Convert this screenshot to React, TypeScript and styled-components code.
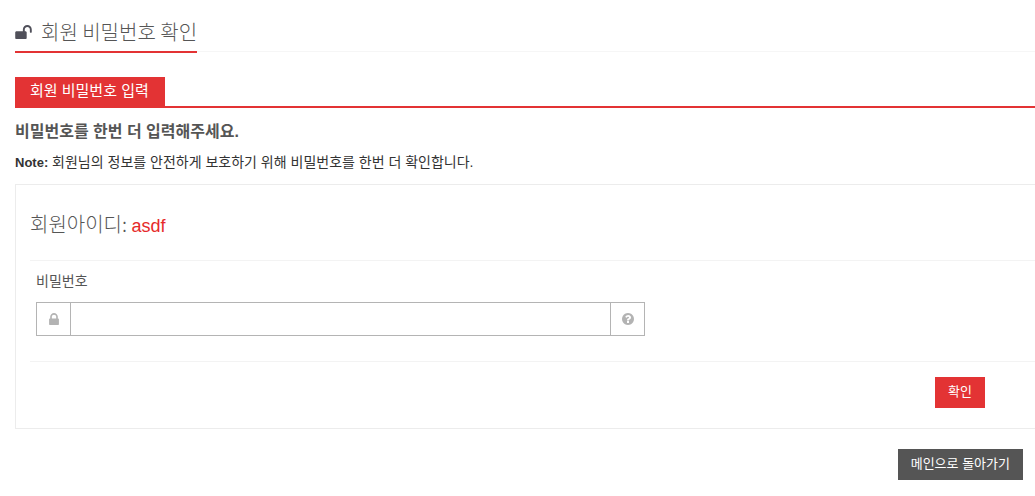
import React from 'react';
import styled, { createGlobalStyle } from 'styled-components';

const RED = '#e33334';
const LATIN_FIRST = '"Liberation Sans", "Noto Sans CJK KR", sans-serif';
const KOREAN_FIRST = '"Noto Sans CJK KR", "Liberation Sans", sans-serif';

const GlobalStyle = createGlobalStyle`
  * { box-sizing: border-box; }
  body {
    margin: 0;
    background: #fff;
    color: #333;
    font-family: ${LATIN_FIRST};
    font-size: 14px;
    line-height: 20px;
  }
`;

const Page = styled.main`
  padding: 20px 0 16px 15px;
`;

const Headline = styled.header`
  display: flex;
  border-bottom: 1px solid #f6f6f6;
`;

const Title = styled.h1`
  display: flex;
  align-items: center;
  gap: 9px;
  margin: 0 0 -2px;
  padding-bottom: 7px;
  border-bottom: 2px solid ${RED};
  color: #555;
  font-family: ${KOREAN_FIRST};
  font-size: 20px;
  font-weight: 300;
  line-height: 24px;
  white-space: nowrap;
`;

const TabBar = styled.nav`
  display: flex;
  margin-top: 25px;
  border-bottom: 2px solid ${RED};
`;

const Tab = styled.a`
  min-width: 150px;
  padding: 2px 15px 3px;
  background: ${RED};
  color: #fff;
  font-size: 15px;
  line-height: 24px;
  text-decoration: none;
`;

const Prompt = styled.h2`
  margin: 14px 0 0;
  color: #555;
  font-size: 16px;
  font-weight: 700;
  line-height: 20px;
`;

const Note = styled.p`
  margin: 10px 0 11px;
  line-height: 20px;
`;

const NoteLabel = styled.strong`
  font-size: 13px;
`;

const Card = styled.form`
  padding: 25px 0 20px 14px;
  border: 1px solid #ececec;
  border-right: 0;
`;

const Member = styled.h3`
  margin: 0;
  padding-bottom: 20px;
  color: #555;
  font-family: ${KOREAN_FIRST};
  font-size: 20px;
  font-weight: 300;
  line-height: 27px;
`;

const MemberId = styled.span`
  color: #e62a2a;
  font-family: ${LATIN_FIRST};
  font-size: 18px;
  font-weight: 400;
`;

const Fields = styled.div`
  padding: 10px 6px 25px;
  border: solid #f3f3f3;
  border-width: 1px 0;
`;

const Label = styled.label`
  display: block;
  margin-bottom: 11px;
  color: #555;
  line-height: 20px;
`;

const InputGroup = styled.div`
  display: flex;
  max-width: 609px;
  height: 34px;
  border: 1px solid #b4b4b4;
`;

const Addon = styled.span`
  display: flex;
  flex: 0 0 33px;
  align-items: center;
  justify-content: center;
  color: #b3b3b3;
`;

const PasswordInput = styled.input`
  flex: 1;
  min-width: 0;
  padding: 6px 12px;
  border: solid #b4b4b4;
  border-width: 0 1px;
  outline: 0;
  background: #fff;
  font: inherit;
`;

const Actions = styled.div<{ $inset: number }>`
  display: flex;
  justify-content: flex-end;
  padding-right: ${({ $inset }) => $inset}px;
`;

const CardActions = styled(Actions)`
  padding-top: 15px;
`;

const PageActions = styled(Actions)`
  padding-top: 20px;
`;

const Button = styled.button<{ $tone: string }>`
  height: 31px;
  padding: 0 13px 2px;
  border: 0;
  background: ${({ $tone }) => $tone};
  color: #fff;
  font-family: inherit;
  font-size: 13px;
  line-height: 20px;
  cursor: pointer;
`;

const UnlockIcon = () => (
  <svg width="17" height="14" viewBox="0 128 1664 1408" fill="#50505a" aria-hidden="true">
    <path d="M1664 576v256q0 26-19 45t-45 19h-64q-26 0-45-19t-19-45v-256q0-106-75-181t-181-75-181 75-75 181v192h96q40 0 68 28t28 68v576q0 40-28 68t-68 28h-960q-40 0-68-28t-28-68v-576q0-40 28-68t68-28h672v-192q0-185 131.5-316.5t316.5-131.5 316.5 131.5 131.5 316.5z" />
  </svg>
);

const LockIcon = () => (
  <svg width="10" height="12" viewBox="0 128 1152 1408" fill="currentColor" aria-hidden="true">
    <path d="M320 768h512v-192q0-106-75-181t-181-75-181 75-75 181v192zm832 96v576q0 40-28 68t-68 28h-960q-40 0-68-28t-28-68v-576q0-40 28-68t68-28h32v-192q0-184 132-316t316-132 316 132 132 316v192h32q40 0 68 28t28 68z" />
  </svg>
);

const QuestionIcon = () => (
  <svg width="12" height="12" viewBox="128 128 1536 1536" fill="currentColor" aria-hidden="true">
    <path d="M1024 1376v-192q0-14-9-23t-23-9h-192q-14 0-23 9t-9 23v192q0 14 9 23t23 9h192q14 0 23-9t9-23zm256-672q0-88-55.5-163t-138.5-116-170-41q-243 0-371 213-15 24 8 42l132 100q7 6 19 6 16 0 25-12 53-68 86-92 34-24 86-24 48 0 85.5 26t37.5 59q0 38-20 61t-68 45q-63 28-115.5 86.5t-52.5 125.5v36q0 14 9 23t23 9h192q14 0 23-9t9-23q0-19 21.5-49.5t54.5-49.5q32-18 49-28.5t46-35 44.5-48 28-60.5 12.5-81zm384 192q0 209-103 385.5t-279.5 279.5-385.5 103-385.5-103-279.5-279.5-103-385.5 103-385.5 279.5-279.5 385.5-103 385.5 103 279.5 279.5 103 385.5z" />
  </svg>
);

export default function App() {
  return (
    <>
      <GlobalStyle />
      <Page>
        <Headline>
          <Title>
            <UnlockIcon />
            회원 비밀번호 확인
          </Title>
        </Headline>
        <TabBar>
          <Tab href="#password">회원 비밀번호 입력</Tab>
        </TabBar>
        <Prompt>비밀번호를 한번 더 입력해주세요.</Prompt>
        <Note>
          <NoteLabel>Note:</NoteLabel> 회원님의 정보를 안전하게 보호하기 위해 비밀번호를 한번 더 확인합니다.
        </Note>
        <Card onSubmit={(event: React.FormEvent) => event.preventDefault()}>
          <Member>
            회원아이디: <MemberId>asdf</MemberId>
          </Member>
          <Fields>
            <Label htmlFor="password">비밀번호</Label>
            <InputGroup>
              <Addon>
                <LockIcon />
              </Addon>
              <PasswordInput id="password" type="password" />
              <Addon>
                <QuestionIcon />
              </Addon>
            </InputGroup>
          </Fields>
          <CardActions $inset={50}>
            <Button type="submit" $tone={RED}>확인</Button>
          </CardActions>
        </Card>
        <PageActions $inset={12}>
          <Button type="button" $tone="#555">메인으로 돌아가기</Button>
        </PageActions>
      </Page>
    </>
  );
}
